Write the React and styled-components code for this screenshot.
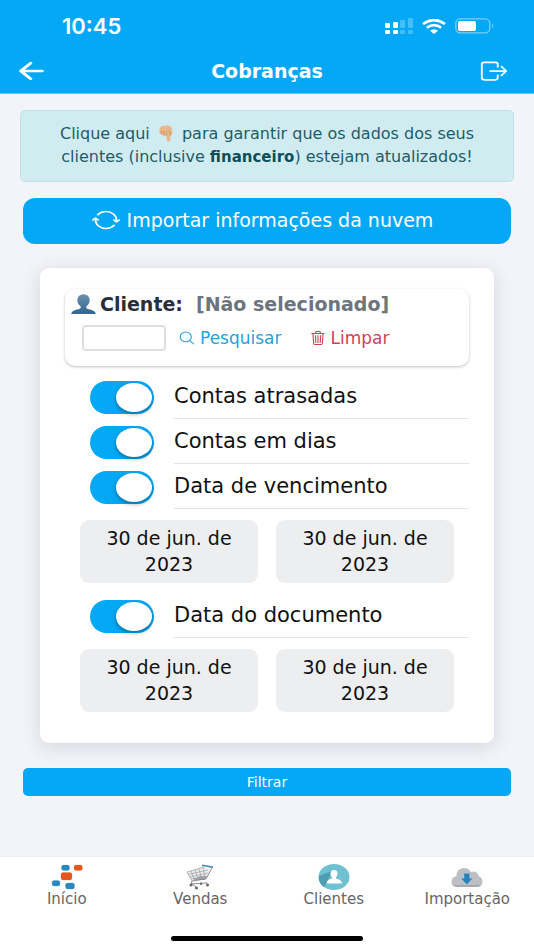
import React from "react";
import styled, { createGlobalStyle } from "styled-components";
import { IoArrowBack, IoExitOutline, IoSyncOutline, IoSearchOutline, IoTrashOutline } from "react-icons/io5";

const blue = "#05a8f5";

const GlobalStyle = createGlobalStyle`
  * { box-sizing: border-box; }
  html, body, #root { height: 100%; }
  body {
    margin: 0;
    background: #f3f4f9;
    font-family: "DejaVu Sans", "Inter", sans-serif;
    color: #111;
  }
  button, input { font: inherit; }
`;

const Page = styled.div`
  min-height: 100%;
  display: flex;
  flex-direction: column;
`;

const Header = styled.header`
  background: ${blue};
  color: #fff;
  border-bottom: 1px solid #5cc6f8;
`;

const StatusBar = styled.div`
  display: flex;
  align-items: center;
  justify-content: space-between;
  height: 48px;
  padding: 4px 40px 0 62px;
`;

const Clock = styled.time`
  font: 600 22px/24px "Inter", sans-serif;
`;

const StatusIcons = styled.div`
  display: flex;
  align-items: center;
  gap: 9px;
`;

const NavBar = styled.div`
  display: grid;
  grid-template-columns: 48px 1fr 48px;
  align-items: center;
  height: 45px;
  padding: 0 7px;
`;

const Glyph = styled.span`
  display: flex;
  flex: none;

  svg {
    width: ${(p) => p.$w}px;
    height: ${(p) => p.$h}px;
  }
`;

const IconButton = styled.button`
  display: flex;
  justify-content: ${(p) => p.$align || "center"};
  padding: 0;
  border: 0;
  background: none;
  color: #fff;
  cursor: pointer;
`;

const Title = styled.h1`
  margin: 0;
  text-align: center;
  font-size: 19px;
  line-height: 24px;
  font-weight: 700;
`;

const Main = styled.main`
  flex: 1;
  display: flex;
  flex-direction: column;
  padding: 16px 20px;
`;

const Notice = styled.a`
  display: block;
  padding: 11px 20px 12px;
  border: 1px solid #bfe3e8;
  border-radius: 5px;
  background: #d1ecf0;
  color: #1d5c68;
  font-size: 16px;
  line-height: 23px;
  text-align: center;
  text-decoration: none;

  svg { vertical-align: -3px; margin: 0 3px; }
  strong { color: #0c4f5b; font-size: 15px; }
`;

const PrimaryButton = styled.button`
  display: flex;
  align-items: center;
  justify-content: center;
  gap: 6px;
  margin: ${(p) => (p.$compact ? "25px" : "16px")} 3px 0;
  height: ${(p) => (p.$compact ? "28px" : "46px")};
  padding: ${(p) => (p.$compact ? "0" : "0 10px 2px 0")};
  border: 0;
  border-radius: ${(p) => (p.$compact ? "5px" : "12px")};
  background: ${blue};
  color: #fff;
  font-size: ${(p) => (p.$compact ? "14px" : "19px")};
  cursor: pointer;
`;

const Card = styled.section`
  margin: 24px 20px 0;
  padding: 21px 25px 31px;
  border-radius: 9px;
  background: #fff;
  box-shadow: 0 4px 18px rgba(50, 50, 93, 0.16);
`;

const ClientPanel = styled.div`
  height: 77px;
  padding: 2px 6px;
  border-radius: 10px;
  box-shadow: 0 1px 3px rgba(0, 0, 0, 0.25);
`;

const ClientHeading = styled.div`
  display: flex;
  align-items: center;
  gap: 4px;
  font-size: 19px;
  line-height: 26px;
  font-weight: 700;
  color: #2b2e38;
  white-space: nowrap;
`;

const ClientValue = styled.span`
  margin-left: 9px;
  color: #6c757d;
`;

const ClientTools = styled.div`
  display: flex;
  align-items: center;
  margin-top: 8px;
  padding-left: 11px;
`;

const CodeInput = styled.input`
  width: 84px;
  height: 26px;
  border: 2px solid #dfdfe1;
  border-radius: 4px;
  background: #fff;
`;

const TextButton = styled.button`
  display: flex;
  align-items: center;
  gap: 4px;
  margin-left: ${(p) => (p.$danger ? "27px" : "12px")};
  padding: 0;
  border: 0;
  background: none;
  color: ${(p) => (p.$danger ? "#cf4256" : "#2a9fd8")};
  font-size: 17px;
  line-height: 24px;
  cursor: pointer;
`;

const ToggleRow = styled.label`
  display: flex;
  padding-left: 25px;
  height: 45px;
  margin-top: ${(p) => p.$top || 0}px;
  gap: 20px;
  cursor: pointer;
`;

const Switch = styled.input`
  appearance: none;
  flex: none;
  width: 64px;
  height: 33px;
  margin: 7px 0 0;
  padding: 2px;
  border-radius: 17px;
  background: #e3e3e6;
  cursor: pointer;

  &::before {
    content: "";
    display: block;
    width: 36px;
    height: 29px;
    border-radius: 50%;
    background: #fff;
    box-shadow: 0 2px 4px rgba(0, 0, 0, 0.35);
  }
  &:checked { background: ${blue}; }
  &:checked::before { margin-left: auto; }
`;

const ToggleText = styled.span`
  flex: 1;
  padding-top: 9px;
  border-bottom: 1px solid #e4e4e6;
  font-size: 21px;
  line-height: 26px;
  white-space: nowrap;
`;

const DateRow = styled.div`
  display: grid;
  grid-template-columns: 1fr 1fr;
  gap: 18px;
  margin-top: 11px;
  padding: 0 15px;
`;

const DateButton = styled.button`
  height: 63px;
  padding: 0 18px 1px;
  border: 0;
  border-radius: 9px;
  background: #edeef0;
  color: #111;
  font-size: 19px;
  line-height: 26px;
  cursor: pointer;
`;

const TabBar = styled.nav`
  display: grid;
  grid-template-columns: repeat(4, 1fr);
  padding-top: 7px;
  height: 80px;
  background: #fff;
  border-top: 1px solid #ececef;
`;

const Tab = styled.a`
  display: flex;
  flex-direction: column;
  align-items: center;
  color: #666;
  font-size: 15px;
  line-height: 18px;
  text-decoration: none;
`;

const HomeArea = styled.footer`
  display: flex;
  justify-content: center;
  height: 14px;
  background: #fff;
`;

const HomeIndicator = styled.div`
  width: 36%;
  height: 5px;
  border-radius: 3px;
  background: #000;
`;

const Signal = () => (
  <svg width="28" height="16" viewBox="0 0 28 16" fill="#fff" aria-hidden="true">
    <rect x="0" y="5" width="5" height="5" rx="1" />
    <rect x="8" y="4" width="5" height="6" rx="1" />
    <rect x="0" y="12" width="5" height="4" rx="1" />
    <rect x="8" y="12" width="5" height="4" rx="1" />
    <g opacity=".25">
      <rect x="15" y="2" width="5" height="8" rx="1" />
      <rect x="23" y="0" width="5" height="10" rx="1" />
      <rect x="15" y="12" width="5" height="4" rx="1" />
      <rect x="23" y="12" width="5" height="4" rx="1" />
    </g>
  </svg>
);

const Wifi = () => (
  <svg width="24" height="15" viewBox="0 0 24 15" fill="none" stroke="#fff" aria-hidden="true">
    <path d="M1 5 Q12 -3 23 5" strokeWidth="2.7" />
    <path d="M4.8 8.8 Q12 3.4 19.2 8.8" strokeWidth="2.5" />
    <path d="M8 11.8 Q12 8.6 16 11.8 L12 15Z" fill="#fff" stroke="none" />
  </svg>
);

const Battery = () => (
  <svg width="39" height="16" viewBox="0 0 39 16" aria-hidden="true">
    <rect x=".8" y=".8" width="34" height="14" rx="4.5" fill="none" stroke="#fff" strokeOpacity=".45" strokeWidth="1.3" />
    <rect x="3" y="3" width="18" height="10" rx="2" fill="#fff" />
    <path d="M37 5.5 Q39 8 37 10.5Z" fill="#fff" opacity=".5" />
  </svg>
);

const PointingHand = () => (
  <svg width="16" height="17" viewBox="0 0 16 17" aria-hidden="true">
    <path d="M3.2 1.2 Q8 -.4 12.6 1.2 Q14.6 4 14.4 8 Q14 10.4 12.4 10.6 V15 Q10.8 17.6 8.8 15.4 L8.2 10.4 Q6.6 11.6 5.2 10.2 Q3.4 10.6 2.8 8.8 Q1.2 8.4 1.2 6.4 Q1.4 3.6 3.2 1.2Z" fill="#e8b88d" />
    <path d="M2.8 8.6 Q3.2 6.6 4.2 5.4 M5.2 10 Q5.4 7.6 6.6 6 M8.2 10.4 Q8.2 8 9 6.4 M12.4 10.6 Q12.6 7.6 11 5.6" fill="none" stroke="#c08a63" strokeWidth=".8" />
  </svg>
);

const Person = () => (
  <svg width="25" height="20" viewBox="0 0 25 20" aria-hidden="true">
    <defs>
      <linearGradient id="person" x1="0" y1="0" x2="0" y2="1">
        <stop offset="0" stopColor="#6d91ad" />
        <stop offset="1" stopColor="#33658f" />
      </linearGradient>
    </defs>
    <path d="M6.3 5.8 Q7 .3 12.5 .2 Q18 .3 18.7 5.8 Q18.8 10 15.3 12.4 V14 Q16 15 20 15.8 Q24.5 17 24.7 20 H.3 Q.5 17 5 15.8 Q9 15 9.7 14 V12.4 Q6.2 10 6.3 5.8Z" fill="url(#person)" />
  </svg>
);

const HomeIcon = () => (
  <svg width="32" height="26" viewBox="0 0 32 26" aria-hidden="true">
    <g fill="#2a88bf" stroke="#cfe4f0" strokeWidth="1" paintOrder="stroke">
      <rect x="10.5" y="1" width="8" height="5.4" rx="2" />
      <rect x="1" y="16.5" width="8" height="5.5" rx="2" />
      <rect x="14.5" y="19" width="9" height="6" rx="2" />
    </g>
    <g fill="#e2581c" stroke="#f8d9cb" strokeWidth="1" paintOrder="stroke">
      <rect x="23" y="1" width="8.4" height="5.4" rx="2" />
      <rect x="10" y="8.5" width="11" height="7.4" rx="2" />
    </g>
  </svg>
);

const CartIcon = () => (
  <svg width="28" height="26" viewBox="0 0 28 26" fill="none" aria-hidden="true">
    <path d="M1 8 L18 2 L25 7 L20 15 L6 17Z" fill="#ececec" />
    <path d="M7 16 L14 12 L21 12.5 L18 16Z" fill="#a0a2a5" />
    <path d="M1 8 L18 3 M2 10.5 L22 6 M3.5 13 L22 9 M5 15 L21 12 M1 8 L6 17 M5 7 L9 16.6 M9 6 L12.5 16 M13 5 L16 15.6 M17 4 L19.5 15" stroke="#9b9da1" strokeWidth=".7" />
    <path d="M26.5 3 L20 15 L6 17 L5 20 L20 19 M6 20 L10 23 M20 18 L22 21" stroke="#85878b" strokeWidth=".9" />
    <path d="M16 1.2 L27 3.2" stroke="#3d86b5" strokeWidth="1.5" />
    <g fill="#66686c">
      <circle cx="5" cy="21" r="1.5" /><circle cx="10.5" cy="24" r="1.5" />
      <circle cx="15" cy="19.7" r="1.2" /><circle cx="21.5" cy="21" r="1.5" />
    </g>
  </svg>
);

const ClientsIcon = () => (
  <svg width="32" height="26" viewBox="0 0 32 26" aria-hidden="true">
    <ellipse cx="16" cy="13" rx="15.5" ry="13" fill="#6fc0d1" />
    <path d="M14 7 L1 12 Q0 19 6 23 L9 18.5Z" fill="#4e9db0" />
    <path d="M12.5 9 Q12.8 6 16 6 Q19.2 6 19.5 9 Q19.5 12 18 13 V14.6 Q23.5 15.5 24 19.5 H8.5 Q9 15.5 14 14.6 V13 Q12.5 12 12.5 9Z" fill="#fff" />
  </svg>
);

const ImportIcon = () => (
  <svg width="32" height="26" viewBox="0 0 32 26" aria-hidden="true">
    <path d="M6 23 Q.5 22.5 .5 17.5 Q.7 12.8 5.5 12 Q5.5 5 12 4 Q17.5 3.5 19.8 8 Q26 5.8 27.5 12 Q31.5 13.5 31.5 17.5 Q31.3 22.5 26 23Z" fill="#bcc0c4" />
    <path d="M2 21 Q3.5 23 6 23 H26 Q28.5 23 30 21Z" fill="#a7abb0" />
    <path d="M13.2 9.5 H18.4 V14.5 H21.5 L15.8 20.3 L10.2 14.5 H13.2Z" fill="#2583bd" />
  </svg>
);

const tabs = [
  ["Início", HomeIcon],
  ["Vendas", CartIcon],
  ["Clientes", ClientsIcon],
  ["Importação", ImportIcon],
];

const Toggle = ({ children, top }) => (
  <ToggleRow $top={top}>
    <Switch type="checkbox" role="switch" defaultChecked />
    <ToggleText>{children}</ToggleText>
  </ToggleRow>
);

const DateRange = ({ label }) => (
  <DateRow role="group" aria-label={label}>
    <DateButton type="button">30 de jun. de 2023</DateButton>
    <DateButton type="button">30 de jun. de 2023</DateButton>
  </DateRow>
);

const Icon = ({ as: Shape, w, h }) => (
  <Glyph $w={w} $h={h}>
    <Shape preserveAspectRatio="none" aria-hidden="true" />
  </Glyph>
);

export default function App() {
  return (
    <Page>
      <GlobalStyle />
      <Header>
        <StatusBar>
          <Clock>10:45</Clock>
          <StatusIcons><Signal /><Wifi /><Battery /></StatusIcons>
        </StatusBar>
        <NavBar>
          <IconButton type="button" aria-label="Voltar">
            <Icon as={IoArrowBack} w={35} h={28} />
          </IconButton>
          <Title>Cobranças</Title>
          <IconButton type="button" aria-label="Sair" $align="flex-start">
            <Icon as={IoExitOutline} w={30} h={28} />
          </IconButton>
        </NavBar>
      </Header>
      <Main>
        <Notice href="#atualizar">
          Clique aqui <PointingHand /> para garantir que os dados dos seus clientes (inclusive{" "}
          <strong>financeiro</strong>) estejam atualizados!
        </Notice>
        <PrimaryButton type="button">
          <Icon as={IoSyncOutline} w={30} h={24} />
          Importar informações da nuvem
        </PrimaryButton>
        <Card>
          <ClientPanel>
            <ClientHeading>
              <Person />
              <label htmlFor="cliente">Cliente:</label>
              <ClientValue>[Não selecionado]</ClientValue>
            </ClientHeading>
            <ClientTools>
              <CodeInput id="cliente" type="text" />
              <TextButton type="button">
                <Icon as={IoSearchOutline} w={18} h={16} />
                Pesquisar
              </TextButton>
              <TextButton type="button" $danger>
                <Icon as={IoTrashOutline} w={18} h={16} />
                Limpar
              </TextButton>
            </ClientTools>
          </ClientPanel>
          <Toggle top={8}>Contas atrasadas</Toggle>
          <Toggle>Contas em dias</Toggle>
          <Toggle>Data de vencimento</Toggle>
          <DateRange label="Data de vencimento" />
          <Toggle top={10}>Data do documento</Toggle>
          <DateRange label="Data do documento" />
        </Card>
        <PrimaryButton type="button" $compact>Filtrar</PrimaryButton>
      </Main>
      <TabBar>
        {tabs.map(([name, Picture]) => (
          <Tab key={name} href={"#" + name.toLowerCase()}>
            <Picture />
            {name}
          </Tab>
        ))}
      </TabBar>
      <HomeArea><HomeIndicator /></HomeArea>
    </Page>
  );
}
